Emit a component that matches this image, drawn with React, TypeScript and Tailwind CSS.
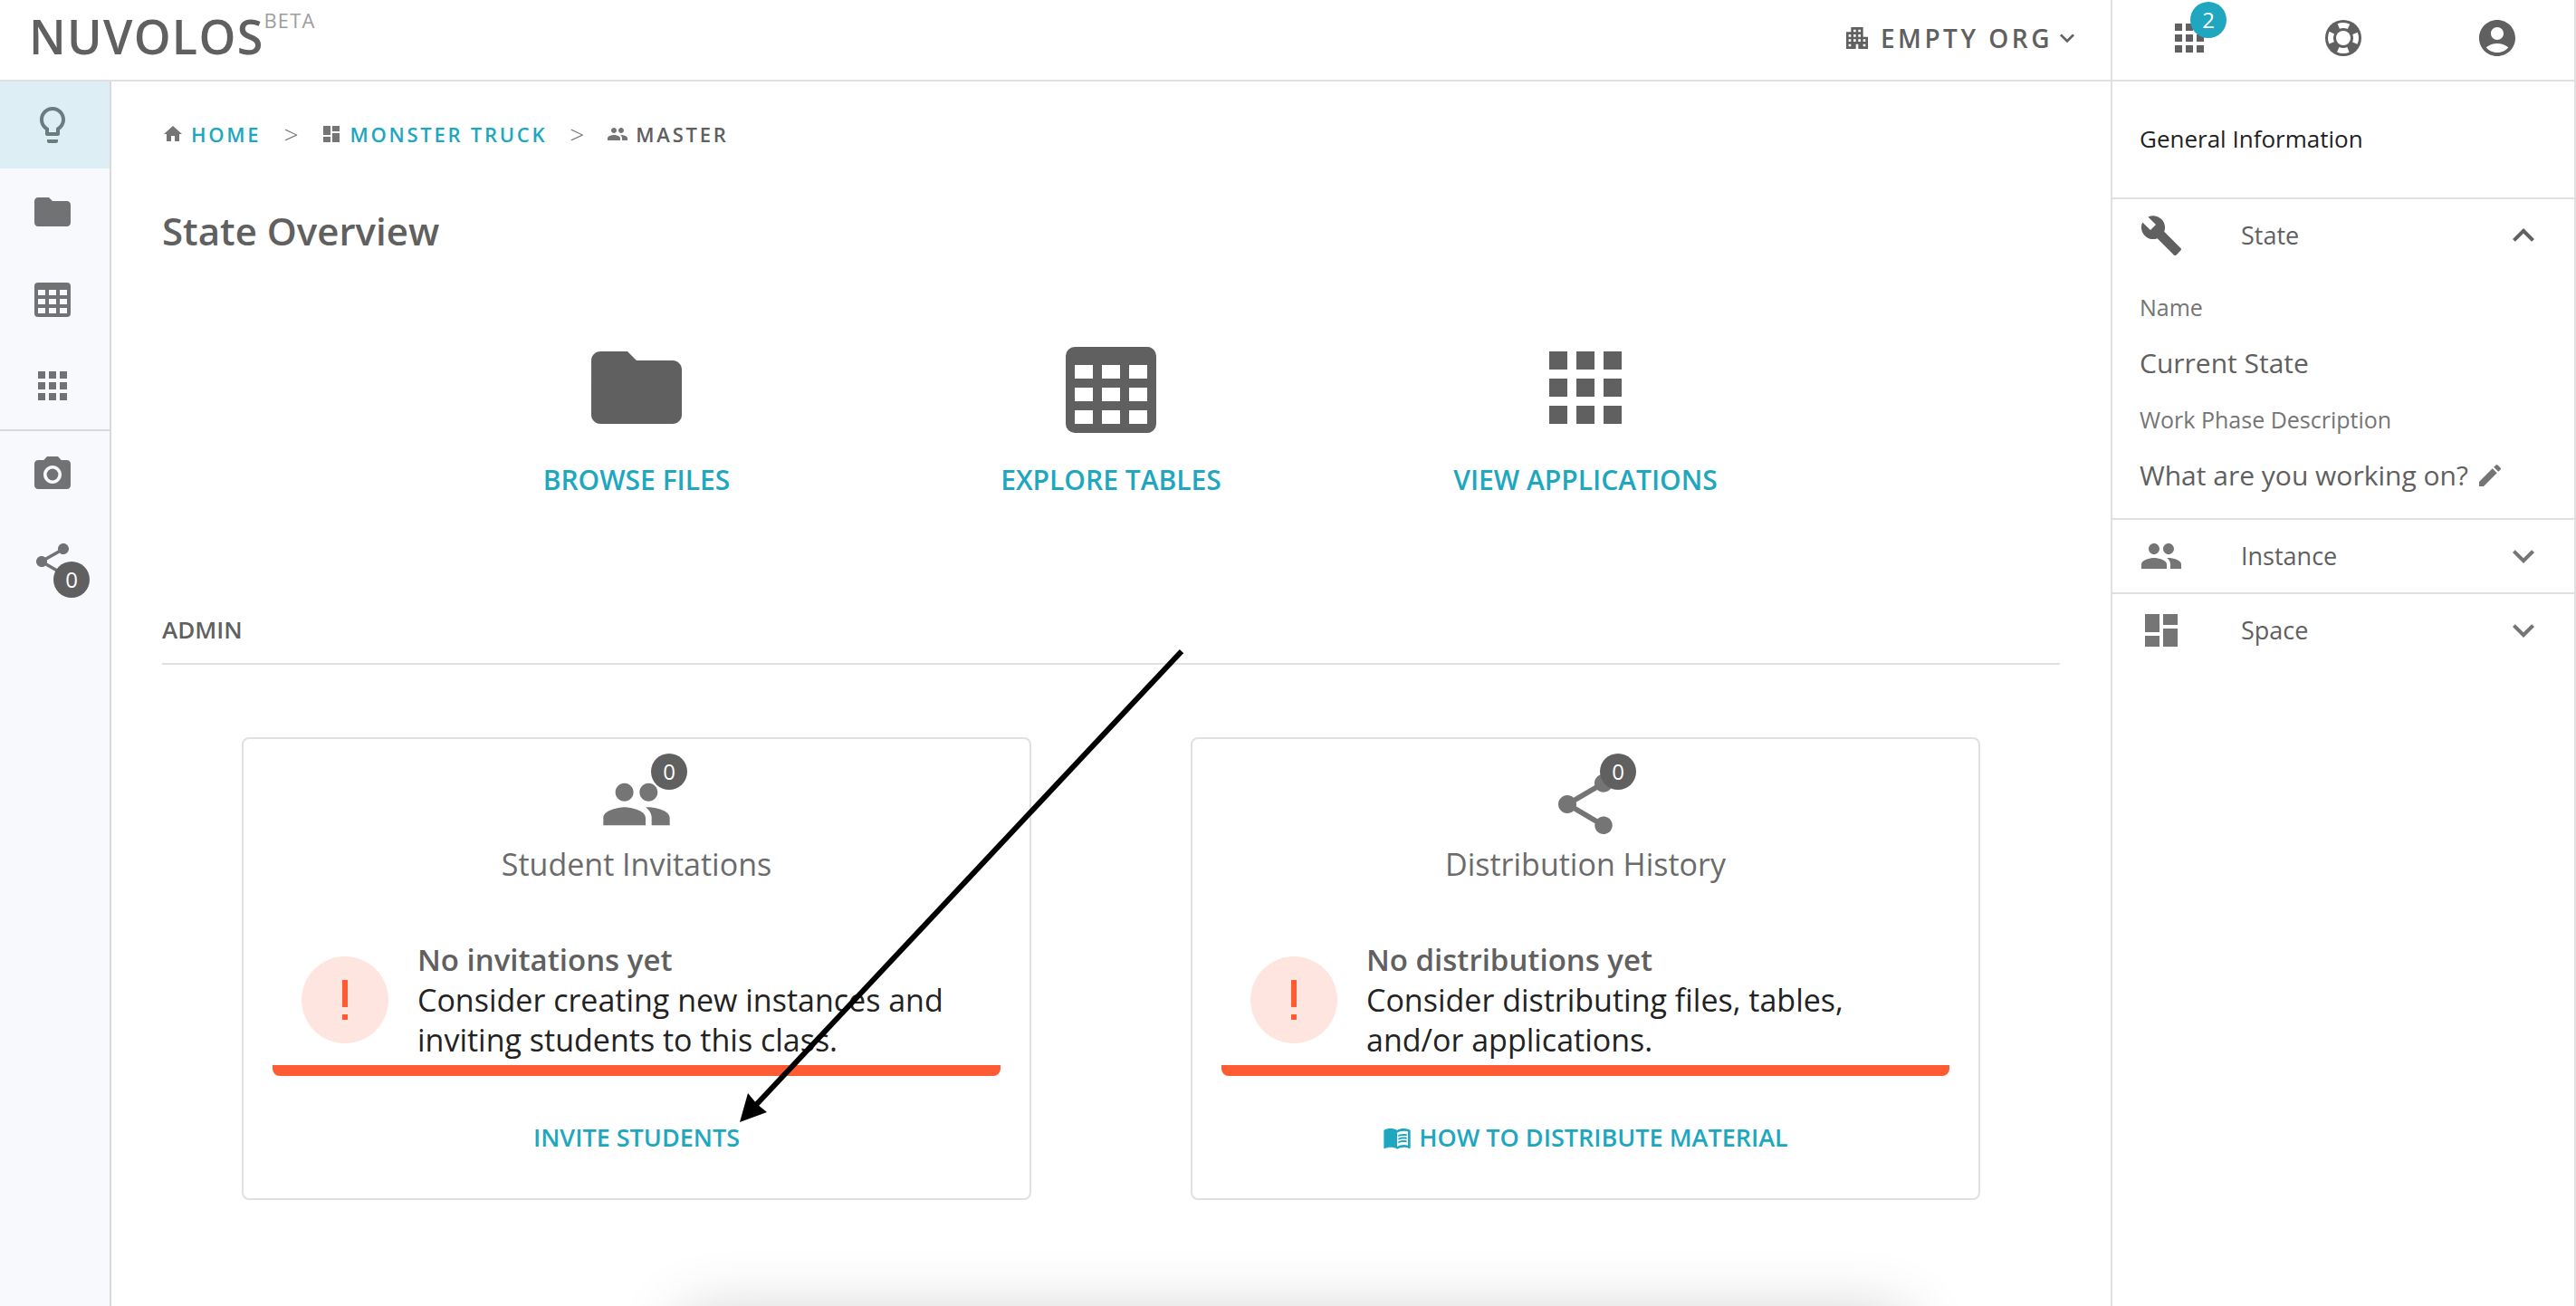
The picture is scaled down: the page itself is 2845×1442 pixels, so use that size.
import type { ReactNode } from "react";
import {
  MdAccountCircle,
  MdApartment,
  MdApps,
  MdBuild,
  MdCameraAlt,
  MdDashboard,
  MdEdit,
  MdExpandLess,
  MdExpandMore,
  MdFolder,
  MdHome,
  MdLightbulbOutline,
  MdMenuBook,
  MdPeople,
  MdShare,
} from "react-icons/md";

function TableIcon({ className }: { className?: string }) {
  return (
    <svg viewBox="0 0 24 24" fill="currentColor" aria-hidden="true" className={className}>
      <path d="M4 3h16a2 2 0 0 1 2 2v15a2 2 0 0 1-2 2H4a2 2 0 0 1-2-2V5a2 2 0 0 1 2-2m0 4v3h4V7H4m6 0v3h4V7h-4m10 3V7h-4v3h4M4 12v3h4v-3H4m0 8h4v-3H4v3m6-8v3h4v-3h-4m0 8h4v-3h-4v3m10 0v-3h-4v3h4m0-8h-4v3h4v-3z" />
    </svg>
  );
}

function LifebuoyIcon({ className }: { className?: string }) {
  return (
    <svg viewBox="0 0 24 24" aria-hidden="true" className={className}>
      <circle cx="12" cy="12" r="10" fill="currentColor" />
      <circle cx="12" cy="12" r="4" fill="#fff" />
      <circle
        cx="12"
        cy="12"
        r="7"
        fill="none"
        stroke="#fff"
        strokeWidth="3"
        strokeDasharray="5.77 5.225"
        strokeDashoffset="2.885"
      />
    </svg>
  );
}

function Badge({ className, children }: { className: string; children: ReactNode }) {
  return (
    <span
      className={`absolute flex size-10 items-center justify-center rounded-full text-[24px] leading-none text-white ${className}`}
    >
      {children}
    </span>
  );
}

function NavItem({ label, active, children }: { label: string; active?: boolean; children: ReactNode }) {
  return (
    <button
      type="button"
      aria-label={label}
      className={`flex h-24 w-full items-center pl-[34px] ${active ? "bg-[#ddeff4] text-[#6a7c80]" : "text-[#717274]"}`}
    >
      {children}
    </button>
  );
}

function Sidebar() {
  return (
    <nav className="w-[123px] shrink-0 bg-[#f7f9fc]">
      <div className="min-h-full border-r-2 border-black/12">
        <NavItem label="Overview" active>
          <MdLightbulbOutline className="size-12" />
        </NavItem>
        <NavItem label="Files">
          <MdFolder className="size-12" />
        </NavItem>
        <NavItem label="Tables">
          <TableIcon className="size-12" />
        </NavItem>
        <NavItem label="Applications">
          <MdApps className="size-12" />
        </NavItem>
        <div className="border-t-2 border-black/12">
          <NavItem label="Snapshots">
            <MdCameraAlt className="size-12" />
          </NavItem>
          <NavItem label="Distribute">
            <span className="relative">
              <MdShare className="size-12" />
              <Badge className="top-6 left-[25px] bg-[#606060]">0</Badge>
            </span>
          </NavItem>
        </div>
      </div>
    </nav>
  );
}

function Header() {
  return (
    <header className="flex h-[90px] shrink-0 items-center border-b-2 border-[#e0e0e0] pr-8 pb-1 pl-8">
      <div className="flex h-full items-start">
        <span className="text-[52px] leading-[80px] font-semibold tracking-wide">NUVOLOS</span>
        <sup className="top-0 pt-2.5 text-[22px] leading-6 tracking-wider text-[#9e9e9e]">BETA</sup>
      </div>
      <button type="button" className="ml-auto flex items-center text-[28px] font-semibold tracking-[0.125em]">
        <MdApartment className="mr-2.5 size-8" />
        EMPTY ORG
        <MdExpandMore className="size-8" />
      </button>
    </header>
  );
}

function Separator() {
  return (
    <span className="w-[66px] text-center text-[28px] leading-8 font-light tracking-normal text-[#757575]">&gt;</span>
  );
}

function Breadcrumbs() {
  return (
    <nav aria-label="Breadcrumb" className="flex h-8 items-center text-[22px] font-semibold tracking-[0.125em]">
      <MdHome className="mr-2 size-6 text-[#757575]" />
      <a href="#home" className="text-[#20a7c0]">
        HOME
      </a>
      <Separator />
      <MdDashboard className="mr-2 size-6 text-[#757575]" />
      <a href="#space" className="text-[#20a7c0]">
        MONSTER TRUCK
      </a>
      <Separator />
      <MdPeople className="mr-2 size-6 text-[#757575]" />
      <span>MASTER</span>
    </nav>
  );
}

function Shortcut({ label, children }: { label: string; children: ReactNode }) {
  return (
    <a href="#open" className="flex flex-col items-center">
      {children}
      <span className="mt-[22px] text-[30px] leading-10 font-semibold text-[#20a7c0]">{label}</span>
    </a>
  );
}

function WarningMark() {
  return (
    <span className="flex size-24 shrink-0 items-center justify-center rounded-full bg-[#ffe5df]">
      <svg viewBox="0 0 6 44" className="h-11 w-1.5" fill="#ff5c33" aria-hidden="true">
        <rect width="6" height="30" />
        <rect y="38" width="6" height="6" />
      </svg>
    </span>
  );
}

type AdminCardProps = {
  icon: ReactNode;
  title: string;
  heading: string;
  body: string;
  action: ReactNode;
};

function AdminCard({ icon, title, heading, body, action }: AdminCardProps) {
  return (
    <section className="mx-[88px] rounded-lg border-2 border-[#e0e0e0] px-8 pt-8 pb-[47px]">
      <div className="relative mx-auto w-20 text-[#757575]">
        {icon}
        <Badge className="-top-4 left-14 bg-[#606060]">0</Badge>
      </div>
      <h3 className="mt-1 text-center text-[34px] leading-[44px] text-[#6b6b6b]">{title}</h3>
      <div className="mt-[62px] flex items-center gap-8 px-8">
        <WarningMark />
        <div className="text-[34px] leading-[44px]">
          <h4 className="text-[33px] font-semibold">{heading}</h4>
          <p className="text-[#222]">{body}</p>
        </div>
      </div>
      <div className="mt-1.5 h-3 rounded-b-lg bg-[#ff5c33]" />
      <div className="mt-12 flex h-10 items-center justify-center text-[27px] font-semibold text-[#20a7c0]">
        {action}
      </div>
    </section>
  );
}

function Main() {
  return (
    <main className="relative min-w-0 flex-1 px-14 pt-[42px]">
      <Breadcrumbs />
      <h1 className="mt-[65px] text-[42px] leading-[52px] font-semibold">State Overview</h1>

      <div className="mt-[87px] grid grid-cols-3 px-[12.5%]">
        <Shortcut label="BROWSE FILES">
          <MdFolder className="size-30" />
        </Shortcut>
        <Shortcut label="EXPLORE TABLES">
          <TableIcon className="size-30" />
        </Shortcut>
        <Shortcut label="VIEW APPLICATIONS">
          <MdApps className="size-30" />
        </Shortcut>
      </div>

      <h2 className="mt-[125px] border-b-2 border-[#e0e0e0] pb-[17px] text-[26px] leading-10 font-semibold">ADMIN</h2>

      <div className="mt-20 grid grid-cols-2">
        <AdminCard
          icon={<MdPeople className="size-20" />}
          title="Student Invitations"
          heading="No invitations yet"
          body="Consider creating new instances and inviting students to this class."
          action={<button type="button">INVITE STUDENTS</button>}
        />
        <AdminCard
          icon={<MdShare className="size-20" />}
          title="Distribution History"
          heading="No distributions yet"
          body="Consider distributing files, tables, and/or applications."
          action={
            <a href="#help" className="flex items-center gap-2">
              <MdMenuBook className="size-8" />
              HOW TO DISTRIBUTE MATERIAL
            </a>
          }
        />
      </div>

      <svg
        viewBox="0 0 490 525"
        className="pointer-events-none absolute top-[625px] left-[694px] h-[525px] w-[490px]"
        aria-hidden="true"
      >
        <path d="M488 4L17 506" stroke="#000" strokeWidth="6" fill="none" />
        <path d="M0 524L9 492L19 504L30 513Z" fill="#000" />
      </svg>
    </main>
  );
}

function PanelRow({ icon, label, open }: { icon: ReactNode; label: string; open?: boolean }) {
  return (
    <button type="button" aria-expanded={!!open} className="flex h-20 w-full items-center pr-8 pl-[30px] text-[27px]">
      {icon}
      <span className="ml-16">{label}</span>
      {open ? (
        <MdExpandLess className="ml-auto size-12" />
      ) : (
        <MdExpandMore className="ml-auto size-12 text-[#757575]" />
      )}
    </button>
  );
}

function InfoPanel() {
  return (
    <aside className="w-[514px] shrink-0 border-x-2 border-[#e0e0e0]">
      <div className="grid h-[90px] grid-cols-3 items-center justify-items-center border-b-2 border-[#e0e0e0] pb-1">
        <button type="button" aria-label="Running applications" className="relative">
          <MdApps className="size-12" />
          <Badge className="-top-4 left-[25px] bg-[#20a7c0]">2</Badge>
        </button>
        <button type="button" aria-label="Support">
          <LifebuoyIcon className="size-12" />
        </button>
        <button type="button" aria-label="Account">
          <MdAccountCircle className="size-12" />
        </button>
      </div>

      <h2 className="flex h-[130px] items-center border-b-2 border-[#e0e0e0] px-[30px] pb-0.5 text-[26px] text-[#222]">
        General Information
      </h2>

      <section className="border-b-2 border-[#e0e0e0] pb-4">
        <PanelRow label="State" open icon={<MdBuild className="size-12" />} />
        <dl className="mt-2 px-[30px] leading-[62px]">
          <dt className="text-[25px] text-[#757575]">Name</dt>
          <dd className="text-[30px]">Current State</dd>
          <dt className="text-[25px] text-[#757575]">Work Phase Description</dt>
          <dd className="flex items-center text-[30px]">
            What are you working on?
            <button type="button" aria-label="Edit description" className="ml-2 text-[#757575]">
              <MdEdit className="size-8" />
            </button>
          </dd>
        </dl>
      </section>
      <section className="border-b-2 border-[#e0e0e0]">
        <PanelRow label="Instance" icon={<MdPeople className="size-12 text-[#757575]" />} />
      </section>
      <section>
        <PanelRow label="Space" icon={<MdDashboard className="size-12 text-[#757575]" />} />
      </section>
    </aside>
  );
}

export default function App() {
  return (
    <div className="relative flex min-h-screen overflow-hidden bg-white font-['Open_Sans',sans-serif] text-[#606060]">
      <div className="flex min-w-0 flex-1 flex-col">
        <Header />
        <div className="flex flex-1">
          <Sidebar />
          <Main />
        </div>
      </div>
      <InfoPanel />
      <div className="pointer-events-none absolute top-full right-[26%] left-[26.5%] mt-2.5 h-20 shadow-[0_0_72px_rgba(0,0,0,0.2)]" />
    </div>
  );
}
